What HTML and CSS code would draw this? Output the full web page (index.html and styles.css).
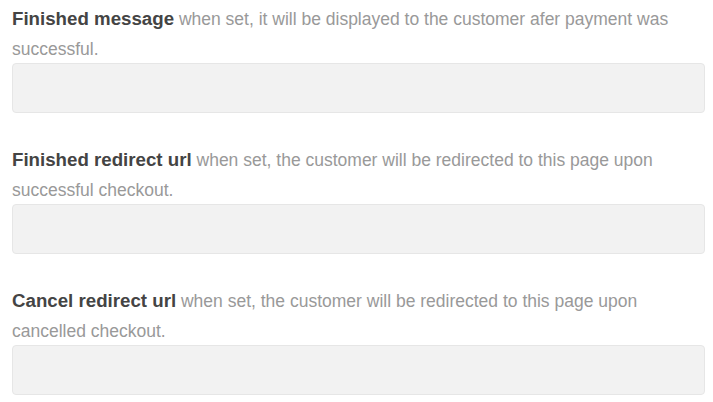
FILE: index.html
```html
<!DOCTYPE html>
<html>
<head>
<meta charset="utf-8">
<link rel="stylesheet" href="styles.css">
</head>
<body>
<div class="form">
  <div class="field">
    <label class="label"><strong class="name">Finished message</strong> when set, it will be displayed to the customer afer payment was successful.</label>
    <div class="input"></div>
  </div>
  <div class="field">
    <label class="label"><strong class="name">Finished redirect url</strong> when set, the customer will be redirected to this page upon successful checkout.</label>
    <div class="input"></div>
  </div>
  <div class="field">
    <label class="label"><strong class="name">Cancel redirect url</strong> when set, the customer will be redirected to this page upon cancelled checkout.</label>
    <div class="input"></div>
  </div>
</div>
</body>
</html>
```
FILE: styles.css
```css
html, body {
  margin: 0;
  padding: 0;
  background: #ffffff;
}
.form {
  padding: 4px 8px 0 12px;
  display: flex;
  flex-direction: column;
  gap: 32px;
  font-family: "Liberation Sans", Arial, sans-serif;
  font-size: 17.5px;
}
.field {
  display: flex;
  flex-direction: column;
}
.label {
  display: block;
  height: 60px;
  line-height: 30px;
  color: #999999;
  margin-bottom: -1px;
}
.name {
  color: #444444;
  font-weight: bold;
  font-size: 18.7px;
  line-height: 1;
}
.input {
  height: 48px;
  background: #f2f2f2;
  border: 1px solid #e6e6e6;
  border-radius: 4px;
}
```
